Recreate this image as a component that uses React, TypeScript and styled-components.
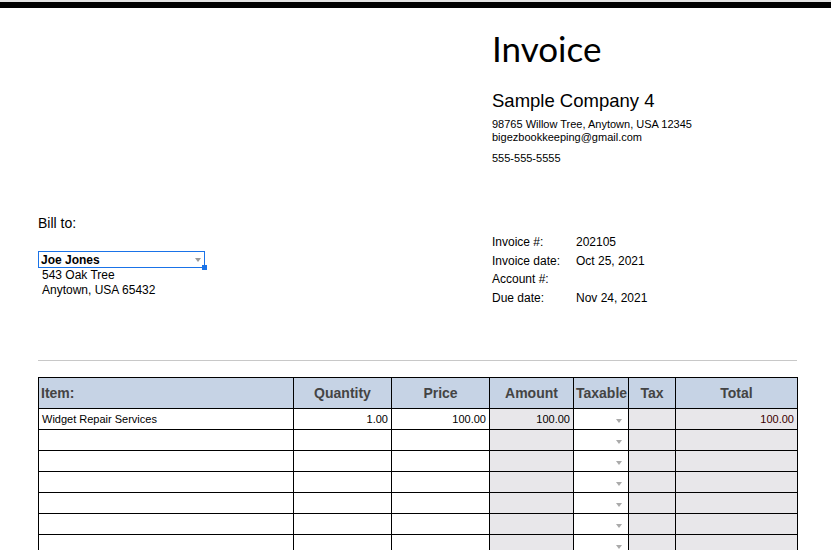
import React from "react";
import styled, { createGlobalStyle } from "styled-components";

const Global = createGlobalStyle`
  body { margin: 0; background: #fff; font-family: "Liberation Sans", Arial, sans-serif; color: #000; }
`;
const TopStrip = styled.div`height: 2px; background: #e3e3e3;`;
const BlackBar = styled.div`height: 6px; background: #000;`;
const Page = styled.div`padding: 0 34px 0 38px; width: 759px;`;
const Header = styled.div`display: flex; height: 193px;`;
const Spacer = styled.div`width: 454px; flex: none;`;
const Company = styled.div`display: flex; flex-direction: column;`;
const Title = styled.div`font-family: Lato, "Liberation Sans", sans-serif; font-size: 35px; margin-top: 20px; height: 48px; line-height: 40px;`;
const CompanyName = styled.div`font-size: 18.5px; margin-top: 14px; line-height: 22px;`;
const Small = styled.div<{ $mt?: number }>`font-size: 11px; line-height: 13px; margin-top: ${p => p.$mt ?? 0}px;`;
const Middle = styled.div`display: flex; height: 159px;`;
const BillCol = styled.div`width: 454px; flex: none; padding-top: 14px;`;
const BillTo = styled.div`font-size: 14px; line-height: 16px;`;
const Select = styled.div`position: relative; margin-top: 20px; width: 160px; height: 15px; border: 1px solid #1a73e8; display: flex; align-items: center; justify-content: space-between; padding: 0 3px 0 2px; font-size: 12px; font-weight: bold;`;
const Handle = styled.span`position: absolute; right: -3px; bottom: -3px; width: 5px; height: 5px; background: #1a73e8;`;
const Caret = styled.span`width: 0; height: 0; border-left: 3.5px solid transparent; border-right: 3.5px solid transparent; border-top: 4px solid #999;`;
const Addr = styled.div`font-size: 12px; line-height: 15px; padding-left: 4px; &:first-of-type { margin-top: 2px; }`;
const Fields = styled.div`display: grid; grid-template-columns: 84px auto; row-gap: 2.5px; padding-top: 33px; font-size: 12px; line-height: 16px; align-content: start;`;
const Rule = styled.div`height: 1px; background: #c8c8c8; margin-bottom: 16px;`;
const Table = styled.table`border-collapse: collapse; width: 759px; table-layout: fixed; font-size: 11px;`;
const Th = styled.th<{ $left?: boolean }>`background: #c6d3e5; border: 1px solid #000; height: 30px; font-size: 14px; font-weight: bold; color: #444; text-align: ${p => p.$left ? "left" : "center"}; padding: 0 2px;`;
const Td = styled.td<{ $gray?: boolean; $right?: boolean; $red?: boolean }>`border: 1px solid #000; height: 20px; padding: 0 3px; background: ${p => p.$gray ? "#e8e7ea" : "#fff"}; text-align: ${p => p.$right ? "right" : "left"}; color: ${p => p.$red ? "#3a0000" : "#000"};`;
const DropCell = styled.td`border: 1px solid #000; height: 20px; text-align: right; padding: 0 6px; &::after { content: ""; display: inline-block; border-left: 3.5px solid transparent; border-right: 3.5px solid transparent; border-top: 4px solid #aaa; }`;

const widths = [255, 98, 98, 84, 55, 47, 122];

export default function App() {
  const rows = Array.from({ length: 7 });
  return (
    <>
      <Global />
      <TopStrip />
      <BlackBar />
      <Page>
        <Header>
          <Spacer />
          <Company>
            <Title>Invoice</Title>
            <CompanyName>Sample Company 4</CompanyName>
            <Small $mt={6}>98765 Willow Tree, Anytown, USA 12345</Small>
            <Small>bigezbookkeeping@gmail.com</Small>
            <Small $mt={8}>555-555-5555</Small>
          </Company>
        </Header>
        <Middle>
          <BillCol>
            <BillTo>Bill to:</BillTo>
            <Select>Joe Jones<Caret /><Handle /></Select>
            <Addr>543 Oak Tree</Addr>
            <Addr>Anytown, USA 65432</Addr>
          </BillCol>
          <Fields>
            <span>Invoice #:</span><span>202105</span>
            <span>Invoice date:</span><span>Oct 25, 2021</span>
            <span>Account #:</span><span></span>
            <span>Due date:</span><span>Nov 24, 2021</span>
          </Fields>
        </Middle>
        <Rule />
        <Table>
          <colgroup>{widths.map((w, i) => <col key={i} style={{ width: w }} />)}</colgroup>
          <thead>
            <tr>
              <Th $left>Item:</Th><Th>Quantity</Th><Th>Price</Th><Th>Amount</Th><Th>Taxable</Th><Th>Tax</Th><Th>Total</Th>
            </tr>
          </thead>
          <tbody>
            {rows.map((_, i) => (
              <tr key={i}>
                <Td>{i === 0 ? "Widget Repair Services" : ""}</Td>
                <Td $right>{i === 0 ? "1.00" : ""}</Td>
                <Td $right>{i === 0 ? "100.00" : ""}</Td>
                <Td $gray $right>{i === 0 ? "100.00" : ""}</Td>
                <DropCell />
                <Td $gray />
                <Td $gray $right $red>{i === 0 ? "100.00" : ""}</Td>
              </tr>
            ))}
          </tbody>
        </Table>
      </Page>
    </>
  );
}
